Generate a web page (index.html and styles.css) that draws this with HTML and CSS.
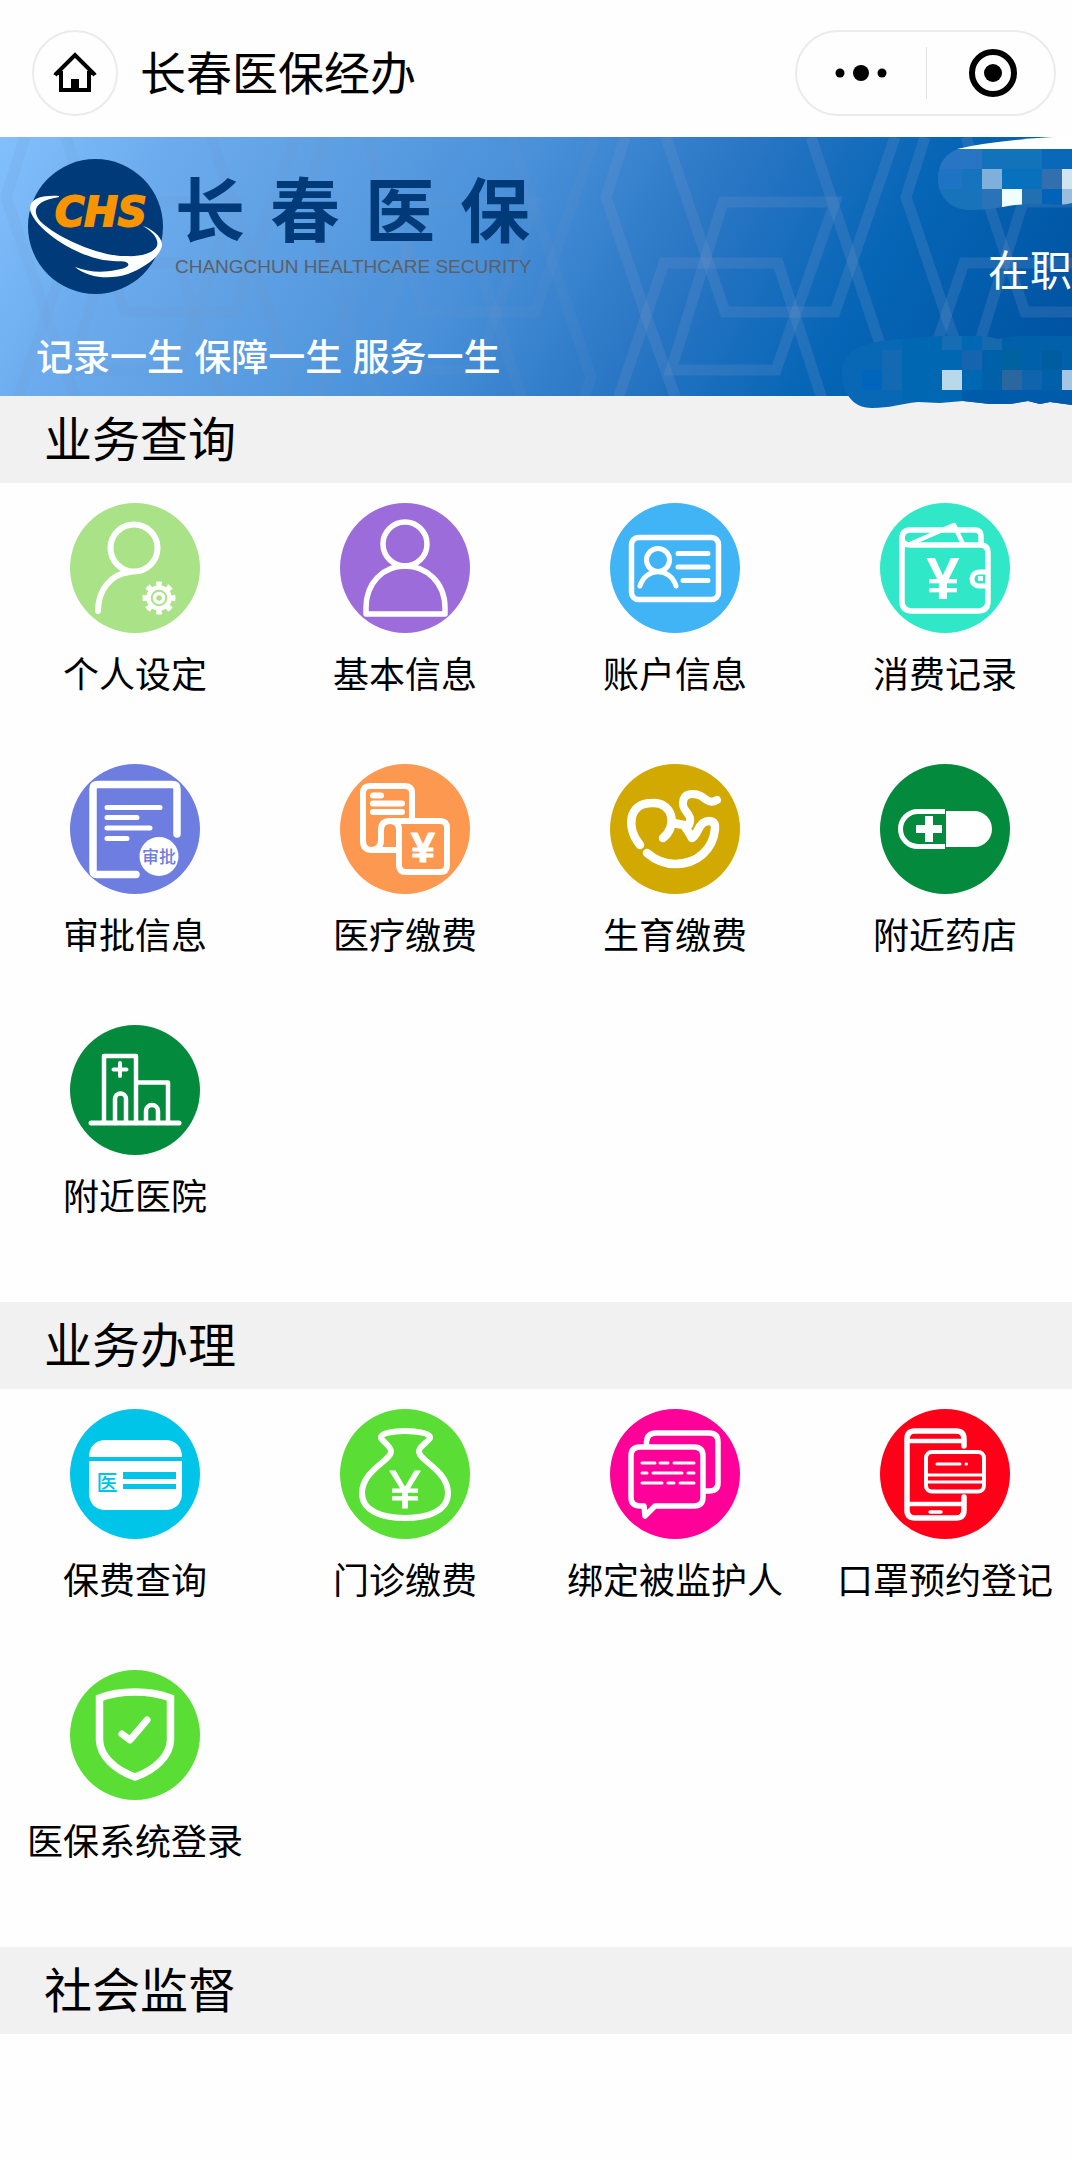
FILE: index.html
```html
<!DOCTYPE html>
<html lang="zh-CN">
<head>
  <meta charset="UTF-8">
  <meta name="viewport" content="width=device-width">
  <title>长春医保经办</title>
  <link rel="stylesheet" href="styles.css">
</head>
<body>

  <header class="topbar">
    <button class="home" aria-label="首页">
      <svg width="46" height="42" viewBox="0 0 46 42">
        <path d="M3 23 L23 3 L43 23 M9 19 V38 H37 V19" fill="none" stroke="#000" stroke-width="4"/>
        <path d="M1 23 H9 V19 Z M45 23 H37 V19 Z M19 27 H27 V38 H19 Z"/>
      </svg>
    </button>
    <h1 class="title">长春医保经办</h1>
    <div class="capsule">
      <button class="capsule-btn" aria-label="更多">
        <svg width="52" height="18" viewBox="0 0 52 18">
          <circle cx="5" cy="9" r="4.5"/>
          <circle cx="26" cy="9" r="8"/>
          <circle cx="47" cy="9" r="4.5"/>
        </svg>
      </button>
      <button class="capsule-btn" aria-label="关闭">
        <svg width="50" height="50" viewBox="0 0 50 50">
          <circle cx="25" cy="25" r="21" fill="none" stroke="#000" stroke-width="6"/>
          <circle cx="25" cy="25" r="9"/>
        </svg>
      </button>
    </div>
  </header>

  <section class="banner">
    <svg class="banner-lines" viewBox="0 0 1072 259" preserveAspectRatio="none">
      <defs>
        <g id="tile">
          <path d="M625 0 L606 60 L649 187 L676 262"/>
          <path d="M666 0 L725 175 H835 L895 0"/>
          <path d="M811 0 L891 240 L884 262"/>
          <path d="M835 65 H723 L671 233 H776 Z"/>
          <path d="M618 262 L664 126 H778 L822 262"/>
        </g>
      </defs>
      <g class="faint">
        <use href="#tile" x="-600"/>
        <use href="#tile" x="-300"/>
      </g>
      <use href="#tile"/>
      <use href="#tile" x="300"/>
    </svg>

    <div class="brand">
      <svg class="logo" width="135" height="135" viewBox="0 0 135 135">
        <circle cx="67.5" cy="67.5" r="67.5" fill="#003a78"/>
        <path fill="#fff" d="M31 37 C12 36 2 40 2 50 C4 66 40 94 75 101 C90 103 97 102 98 103 C104 106 98 110 88 111 C74 114 60 113 47 108 C60 119 82 121 100 115 C118 108 134 96 134 85 C133 77 124 70 115 67 C125 73 131 80 129 87 C126 94 112 98 98 97 C75 98 30 80 12 62 C4 52 6 42 31 38 Z"/>
        <text class="chs" x="27" y="67">CHS</text>
      </svg>
      <div class="brand-text">
        <div class="brand-name"><span>长</span><span>春</span><span>医</span><span>保</span></div>
        <div class="brand-en">CHANGCHUN HEALTHCARE SECURITY</div>
      </div>
    </div>
    <p class="slogan">记录一生 保障一生 服务一生</p>
    <p class="status">在职</p>

    <svg class="mosaic" width="240" height="272" viewBox="832 0 240 272">
      <defs>
        <clipPath id="blob1"><path d="M958 12 H1072 V66 Q1062 69 1050 67 Q1030 66 1008 69 Q990 73 970 73 C949 73 938 58 938 42 C938 26 946 16 958 12 Z"/></clipPath>
        <clipPath id="blob2"><path d="M842 235 C842 214 862 206 890 203 Q930 198 985 199 L998 202 L1015 199 H1072 V268 L1050 265 L1040 267 L1028 264 L1010 267 H990 L963 264 L940 266 L918 265 C900 267 890 271 872 271 C852 271 842 255 842 235 Z"/></clipPath>
      </defs>
      <path d="M957 12 Q990 4 1053 0 H1072 V12 Z" fill="#fff"/>
      <g clip-path="url(#blob1)">
        <path fill="#2876c3" d="M932 12h50v20h-50z"/>
        <path fill="#1272ba" d="M982 12h60v20h-60z"/>
        <path fill="#0a68b8" d="M1042 12h30v20h-30z"/>
        <path fill="#1e73c4" d="M932 32h30v20h-30z"/>
        <path fill="#1674bf" d="M962 32h20v20h-20z"/>
        <path fill="#7fb0db" d="M982 32h20v20h-20z"/>
        <path fill="#0871bd" d="M1002 32h40v20h-40z"/>
        <path fill="#326fae" d="M1042 32h20v20h-20z"/>
        <path fill="#d0e4f2" d="M1062 32h10v20h-10z"/>
        <path fill="#1973bb" d="M932 52h50v22h-50z"/>
        <path fill="#2a73b8" d="M982 52h20v22h-20z"/>
        <path fill="#effeff" d="M1002 52h20v22h-20z"/>
        <path fill="#2270b0" d="M1022 52h20v22h-20z"/>
        <path fill="#0063b8" d="M1042 52h20v22h-20z"/>
        <path fill="#9bbddc" d="M1062 52h10v22h-10z"/>
      </g>
      <g clip-path="url(#blob2)">
        <path fill="#0868b6" d="M832 190h70v82h-70z"/>
        <path fill="#0067b3" d="M902 190h80v82h-80z"/>
        <path fill="#0060aa" d="M982 190h90v82h-90z"/>
        <path fill="#166db3" d="M942 190h20v23h-20z"/>
        <path fill="#1569ac" d="M982 190h20v23h-20z"/>
        <path fill="#1469b3" d="M882 213h20v40h-20z"/>
        <path fill="#0065bd" d="M862 233h20v20h-20z"/>
        <path fill="#1663b0" d="M962 213h20v20h-20z"/>
        <path fill="#00629f" d="M1002 213h20v20h-20z"/>
        <path fill="#005da0" d="M1042 213h20v20h-20z"/>
        <path fill="#b9d8ea" d="M942 233h20v20h-20z"/>
        <path fill="#2b679f" d="M1002 233h20v20h-20z"/>
        <path fill="#1063ad" d="M1022 233h20v20h-20z"/>
        <path fill="#a5c5e5" d="M1062 233h10v20h-10z"/>
        <path fill="#005bab" d="M962 253h110v19h-110z"/>
      </g>
    </svg>
  </section>

  <h2 class="section-title">业务查询</h2>
  <nav class="menu">
    <a class="item" href="#">
      <svg class="icon lime" viewBox="0 0 130 130">
        <circle cx="64" cy="45" r="23.5" stroke-width="6"/>
        <path d="M60 69 C40 71 28 88 28 108" stroke-width="6"/>
        <circle cx="89" cy="95" r="14" stroke-width="5" pathLength="16" stroke-dasharray="1 1" stroke-dashoffset="0.5" stroke-linecap="butt"/>
        <circle cx="89" cy="95" r="10.5" stroke-width="4.5"/>
        <circle cx="89" cy="95" r="4.5" stroke-width="3.5"/>
      </svg>
      <span class="label">个人设定</span>
    </a>
    <a class="item" href="#">
      <svg class="icon purple" viewBox="0 0 130 130">
        <circle cx="65" cy="41" r="22" stroke-width="5.5"/>
        <path d="M26 111 V105 C26 80 43 63 65 63 S105 80 105 105 V111 Z" stroke-width="5.5"/>
      </svg>
      <span class="label">基本信息</span>
    </a>
    <a class="item" href="#">
      <svg class="icon sky" viewBox="0 0 130 130">
        <rect x="21.5" y="34.5" width="87" height="62" rx="7" stroke-width="5.5"/>
        <circle cx="48" cy="57" r="11.5" stroke-width="5"/>
        <path d="M30 83 C36 64 60 64 66 83" stroke-width="5"/>
        <path d="M68 50.5 H98 M68 64 H98 M73 77.5 H98" stroke-width="5"/>
      </svg>
      <span class="label">账户信息</span>
    </a>
    <a class="item" href="#">
      <svg class="icon mint" viewBox="0 0 130 130">
        <path d="M22 46 V36 Q22 27 30 27 H95 Q101 27 101 33 V41" stroke-width="5.5"/>
        <path d="M22 36 V98 Q22 108 32 108 H98 Q108 108 108 98 V50 Q108 42 100 42 H30 Q23 42 22 36" stroke-width="5.5"/>
        <path d="M30 41 L74 22 L83 41" stroke-width="4.5"/>
        <path d="M107 69 H99 a7 7 0 0 0 0 14 H107" stroke-width="5"/>
        <path class="solid" d="M98 73h5v5h-5z"/>
        <text class="glyph bold" x="63" y="96" font-size="60">¥</text>
      </svg>
      <span class="label">消费记录</span>
    </a>
    <a class="item" href="#">
      <svg class="icon indigo" viewBox="0 0 130 130">
        <path d="M66 110.5 H27 Q23 110.5 23 106 V25 Q23 20.5 28 20.5 H102 Q107 20.5 107 25 V70" stroke-width="7.5"/>
        <path d="M37 43.5 H90 M37 53.5 H67 M37 64 H80 M37 74.5 H57" stroke-width="5"/>
        <circle class="solid" cx="89" cy="92.5" r="19.5"/>
        <text class="glyph medium tint" x="89" y="99" font-size="17">审批</text>
      </svg>
      <span class="label">审批信息</span>
    </a>
    <a class="item" href="#">
      <svg class="icon orange" viewBox="0 0 130 130">
        <path d="M72 55 V29 Q72 22 65 22 H30 Q23 22 23 29 V77 Q23 86 32 86 H56" stroke-width="6"/>
        <path d="M32 86 Q41 85 41 76 V66 Q41 57 50 57 Q59 57 59 66" stroke-width="6"/>
        <path d="M50 57 H100 Q107 57 107 64 V101 Q107 108 100 108 H66 Q59 108 59 101 V66" stroke-width="6"/>
        <path d="M33 31.5 H41 M33 39.5 H62 M33 48 H62" stroke-width="6"/>
        <text class="glyph bold round" x="83" y="98" font-size="43">¥</text>
      </svg>
      <span class="label">医疗缴费</span>
    </a>
    <a class="item" href="#">
      <svg class="icon gold" viewBox="0 0 130 130">
        <path d="M30 81 C16 64 18 39 42 39 C63 38 68 62 53 74" stroke-width="8.5"/>
        <path d="M63 59 L74 61 C77 66 80 70 82 74 C88 70 87 64 93 59 C99 55 106 57 105 65 C103 85 88 100 65 100 C53 100 44 95 37 89" stroke-width="8.5"/>
        <path d="M79 61 C84 50 72 48 73 39 C73 28 85 29 91 32 C97 36 100 40 107 36" stroke-width="8"/>
      </svg>
      <span class="label">生育缴费</span>
    </a>
    <a class="item" href="#">
      <svg class="icon green" viewBox="0 0 130 130">
        <path d="M65 47.5 H38 A17.5 17.5 0 0 0 38 82.5 H65" stroke-width="5" stroke-linecap="butt"/>
        <path class="solid" d="M66 47 H94 A18 18 0 0 1 94 83 H66 Z"/>
        <path d="M36 65 H62 M49 52 V78" stroke-width="8" stroke-linecap="butt"/>
      </svg>
      <span class="label">附近药店</span>
    </a>
    <a class="item" href="#">
      <svg class="icon green" viewBox="0 0 130 130">
        <path d="M21 98 H109" stroke-width="5"/>
        <path d="M34 98 V31 H66 V98 M66 57.5 H98 V98" stroke-width="4.5"/>
        <path d="M45 98 V74 a5.5 5.5 0 0 1 11 0 V98 M76 98 V86 a6 6 0 0 1 12 0 V98" stroke-width="4.5"/>
        <path d="M43.5 44.5 H56.5 M50 38 V51" stroke-width="4"/>
      </svg>
      <span class="label">附近医院</span>
    </a>
  </nav>

  <h2 class="section-title">业务办理</h2>
  <nav class="menu">
    <a class="item" href="#">
      <svg class="icon cyan" viewBox="0 0 130 130">
        <path class="solid" d="M19 48 C19 37 26 31 36 31 H95 C105 31 112 37 112 48 Z"/>
        <path class="solid" d="M19 52 H112 V84 C112 95 105 101 95 101 H36 C26 101 19 95 19 84 Z"/>
        <path class="solid tint" d="M53 63 H106 V70 H53 Z M53 75 H106 V80 H53 Z"/>
        <text class="glyph medium tint" x="37" y="81" font-size="21">医</text>
      </svg>
      <span class="label">保费查询</span>
    </a>
    <a class="item" href="#">
      <svg class="icon grass" viewBox="0 0 130 130">
        <path d="M65 22 C54 22 40 24 41 29 C43 33 52 38 51 43 C50 52 22 62 22 84 C22 102 42 109 65 109 C88 109 108 102 108 84 C108 62 80 52 79 43 C78 38 88 33 90 29 C91 24 76 22 65 22 Z" stroke-width="6"/>
        <text class="glyph round" x="65" y="99" font-size="54">¥</text>
      </svg>
      <span class="label">门诊缴费</span>
    </a>
    <a class="item" href="#">
      <svg class="icon pink" viewBox="0 0 130 130">
        <path d="M36.5 36 V33 Q37 24 46 24 H99 Q108 24 108 33 V74 Q108 82 99 82 H96" stroke-width="5.5"/>
        <path d="M30 38 H84 Q93 38 93 47 V88 Q93 97 84 97 H45 L35 107 L34 97 H30 Q21 97 21 88 V47 Q21 38 30 38 Z" stroke-width="5.5"/>
        <path d="M32 54 H45 M50 54 H58 M64 54 H84 M32 64 H37 M43 64 H72 M78 64 H84 M32 74 H52 M58 74 H64 M70 74 H84" stroke-width="3"/>
      </svg>
      <span class="label">绑定被监护人</span>
    </a>
    <a class="item" href="#">
      <svg class="icon red" viewBox="0 0 130 130">
        <path d="M84 37 V30 Q84 22 76 22 H35 Q27 22 27 30 V101 Q27 109 35 109 H76 Q84 109 84 101 V88" stroke-width="5.5"/>
        <path d="M27 32 H84 M27 95 H84" stroke-width="4.5"/>
        <path d="M50 103 H61" stroke-width="3.5"/>
        <rect x="46" y="43" width="58" height="39.5" rx="6" stroke-width="4"/>
        <path d="M46 66 H104 M46 73 H104 M57 55 H80 M86 55 H86.5" stroke-width="3"/>
      </svg>
      <span class="label">口罩预约登记</span>
    </a>
    <a class="item" href="#">
      <svg class="icon grass" viewBox="0 0 130 130">
        <path d="M29.5 28 C50 20 80 20 100.5 28 V70 C100 86 85 100 65 107 C45 100 30 86 29.5 70 Z" stroke-width="7.5" stroke-linejoin="miter"/>
        <path d="M52 64 L60 70 L77 50" stroke-width="7"/>
      </svg>
      <span class="label">医保系统登录</span>
    </a>
  </nav>

  <h2 class="section-title">社会监督</h2>

</body>
</html>
```

FILE: styles.css
```css
html, body {
  margin: 0;
  padding: 0;
}
body {
  background-color: #fefefe;
  color: #000;
  font-family: "Noto Sans CJK SC", "Liberation Sans", sans-serif;
  overflow-x: hidden;
}
button {
  background: none;
  border: 0;
  padding: 0;
  cursor: pointer;
}

/* top bar */
.topbar {
  display: flex;
  align-items: center;
  box-sizing: border-box;
  height: 137px;
  padding: 8px 16px 0 32px;
}
.home {
  display: flex;
  align-items: center;
  justify-content: center;
  box-sizing: border-box;
  width: 86px;
  height: 86px;
  border: 2px solid #ebebeb;
  border-radius: 50%;
}
.title {
  flex: 1;
  margin: 0 0 0 22px;
  padding-bottom: 6px;
  font-size: 46px;
  font-weight: 400;
  line-height: 64px;
}
.capsule {
  display: flex;
  align-items: center;
  box-sizing: border-box;
  width: 261px;
  height: 86px;
  border: 2px solid #ebebeb;
  border-radius: 43px;
}
.capsule-btn {
  display: flex;
  flex: 1 1 50%;
  align-items: center;
  justify-content: center;
  box-sizing: border-box;
  height: 52px;
}
.capsule-btn + .capsule-btn {
  border-left: 1px solid #e2e2e2;
  padding-left: 6px;
}

/* banner */
.banner {
  position: relative;
  box-sizing: border-box;
  height: 259px;
  padding: 22px 0 0 28px;
  background: linear-gradient(120deg, #82bffd 0%, #6cacee 14%, #61a2e5 25%, #4a91da 44%, #2976c4 62%, #0665b6 78%, #0054a3 96%);
}
.banner-lines {
  position: absolute;
  top: 0;
  left: 0;
  width: 100%;
  height: 100%;
  fill: none;
  stroke: rgba(120, 150, 200, .22);
  stroke-width: 11;
}
.faint {
  opacity: .5;
}
.brand {
  position: relative;
  display: flex;
  gap: 12px;
}
.chs {
  fill: #f79400;
  stroke: #f79400;
  stroke-width: 2;
  font: italic bold 40px "DejaVu Sans", sans-serif;
}
.brand-text {
  width: 355px;
  padding-top: 8px;
}
.brand-name {
  display: flex;
  justify-content: space-between;
  color: #003a78;
  font-size: 70px;
  font-weight: 700;
  line-height: 80px;
}
.brand-en {
  color: #5b6067;
  font-family: "Liberation Sans", sans-serif;
  font-size: 19px;
  line-height: 40px;
  white-space: nowrap;
}
.slogan {
  position: relative;
  margin: 38px 0 0 8px;
  color: #fff;
  font-family: "Liberation Sans", "Noto Sans CJK SC", sans-serif;
  font-size: 37px;
  font-weight: 500;
  line-height: 54px;
}
.status {
  position: absolute;
  top: 104px;
  right: 0;
  margin: 0;
  color: #fff;
  font-size: 42px;
  line-height: 54px;
}
.mosaic {
  position: absolute;
  top: 0;
  right: 0;
}

/* menu sections */
.section-title {
  margin: 0;
  padding: 0 0 6px 44px;
  background-color: #f1f1f1;
  font-size: 48px;
  font-weight: 400;
  line-height: 81px;
}
.menu {
  display: grid;
  grid-template-columns: repeat(4, 1fr);
  grid-auto-rows: 261px;
  margin-right: -8px;
  padding: 20px 0 16px;
}
.item {
  display: flex;
  flex-direction: column;
  align-items: center;
  gap: 14px;
  color: #000;
  text-decoration: none;
}
.label {
  font-size: 36px;
  line-height: 50px;
  white-space: nowrap;
}
.icon {
  width: 130px;
  height: 130px;
  border-radius: 50%;
  background-color: currentColor;
  fill: none;
  stroke: #fff;
  stroke-linecap: round;
  stroke-linejoin: round;
}
.solid {
  fill: #fff;
  stroke: none;
}
.glyph {
  fill: #fff;
  stroke: none;
  font-family: "Liberation Sans", "Noto Sans CJK SC", sans-serif;
  text-anchor: middle;
}
.medium {
  font-family: "Noto Sans CJK SC", sans-serif;
  font-weight: 500;
}
.bold {
  font-weight: 700;
}
.round {
  stroke: #fff;
  stroke-width: 1;
}
.tint {
  fill: currentColor;
}
.lime { color: #a9e287; }
.purple { color: #9d6cdb; }
.sky { color: #40b4f5; }
.mint { color: #30e8c8; }
.indigo { color: #6d7de0; }
.orange { color: #fd9850; }
.gold { color: #d1a900; }
.green { color: #038a3c; }
.cyan { color: #00c4e8; }
.grass { color: #5add35; }
.pink { color: #ff0098; }
.red { color: #ff0019; }
```
